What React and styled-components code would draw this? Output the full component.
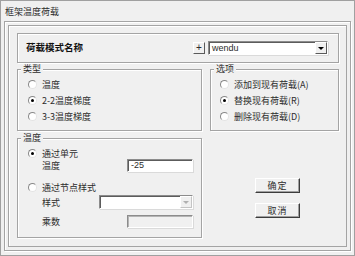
import React from "react";
import styled, { createGlobalStyle } from "styled-components";

const bg = "#f0f0f0";
const line = "#a4a4a4";
const cjk = `"Noto Sans CJK SC", "Noto Sans", sans-serif`;

const Global = createGlobalStyle`
  html, body { margin: 0; padding: 0; background: ${bg}; }
`;

const Window = styled.div`
  width: 355px;
  height: 256px;
  box-sizing: border-box;
  border: 1px solid #a0a0a0;
  background: ${bg};
  display: flex;
  flex-direction: column;
  font-family: ${cjk};
  font-size: 9px;
  color: #2c2c2c;
`;

const TitleBar = styled.div`
  height: 20px;
  display: flex;
  align-items: center;
  padding-left: 4px;
  line-height: 1;
`;

// etched double frame around the dialog body
const Frame = styled.div`
  flex: 1;
  margin: 0 3px 4px 3px;
  padding: 3px;
  display: flex;
  border: 1px solid ${line};
  box-shadow: inset 1px 1px 0 #fff, 1px 1px 0 #fff;
`;

const Body = styled.div`
  flex: 1;
  display: flex;
  flex-direction: column;
  padding: 7px 7px 0 8px;
  border: 1px solid ${line};
  box-shadow: inset 1px 1px 0 #fff;
`;

const NameBox = styled.div`
  width: 322px;
  height: 30px;
  box-sizing: border-box;
  display: flex;
  align-items: center;
  padding: 0 10px 0 8px;
  border: 1px solid ${line};
  box-shadow: inset 1px 1px 0 #fff, 1px 1px 0 #fff;
`;

const NameLabel = styled.span`
  flex: 1;
  font-size: 9.5px;
  font-weight: 700;
  line-height: 1;
  color: #111;
`;

const Raised = styled.div`
  box-sizing: border-box;
  background: ${bg};
  border: 1px solid;
  border-color: #fff #5a5a5a #5a5a5a #fff;
  display: flex;
  align-items: center;
  justify-content: center;
`;

const PlusButton = styled(Raised)`
  width: 12px;
  height: 12px;
  margin-right: 3px;
  font-family: "Liberation Sans", sans-serif;
  font-size: 10px;
  line-height: 1;
`;

const Sunken = styled.div`
  box-sizing: border-box;
  width: ${(p) => p.$w}px;
  height: ${(p) => p.$h || 13}px;
  background: ${(p) => (p.$disabled ? bg : "#fff")};
  border: 1px solid;
  border-color: #8c8c8c #fff #fff #8c8c8c;
  box-shadow: inset 1px 1px 0 ${(p) => (p.$disabled ? "#b4b4b4" : "#5c5c5c")},
    1px 1px 0 #dadada;
  display: flex;
  align-items: center;
`;

const FieldText = styled.span`
  flex: 1;
  padding-left: 3px;
  font-family: "Liberation Sans", sans-serif;
  font-size: 9px;
  line-height: 1;
`;

const ArrowButton = styled(Raised)`
  width: 12px;
  height: 100%;
  border-color: ${(p) => (p.$disabled ? "#fff #c4c4c4 #c4c4c4 #fff" : "#fff #5a5a5a #5a5a5a #fff")};

  &::after {
    content: "";
    border-left: 3px solid transparent;
    border-right: 3px solid transparent;
    border-top: 3px solid ${(p) => (p.$disabled ? "#b0b0b0" : "#000")};
  }
`;

const Grid = styled.div`
  margin-top: 1px;
  display: grid;
  grid-template-columns: 185px 129px;
  grid-template-rows: 67px auto;
  column-gap: 8px;
  row-gap: 2px;
`;

const Group = styled.fieldset`
  margin: 0;
  min-width: 0;
  box-sizing: border-box;
  align-self: ${(p) => (p.$top ? "start" : "stretch")};
  padding: ${(p) => p.$pad || "2px 8px 5px 10px"};
  border: 1px solid ${line};
  box-shadow: inset 1px 1px 0 #fff, 1px 1px 0 #fff;
`;

const Caption = styled.legend`
  margin-left: ${(p) => p.$shift || -7}px;
  padding: 0 2px;
  font-size: 9px;
  line-height: 10px;
  background: ${bg};
`;

const RadioRow = styled.label`
  display: flex;
  align-items: center;
  gap: 5px;
  height: ${(p) => p.$h || 16}px;
  margin-top: ${(p) => p.$mt || 0}px;
  line-height: 1;
  white-space: nowrap;
`;

const RadioMark = styled.span`
  width: 9px;
  height: 9px;
  box-sizing: border-box;
  border-radius: 50%;
  background: #fff;
  border: 1px solid;
  border-color: #888 #e4e4e4 #e4e4e4 #888;
  display: grid;
  place-items: center;

  &::after {
    content: "";
    width: 3px;
    height: 3px;
    border-radius: 50%;
    background: ${(p) => (p.$on ? "#000" : "transparent")};
  }
`;

const SubRow = styled.div`
  display: flex;
  align-items: center;
  justify-content: space-between;
  margin-left: 14px;
  margin-top: ${(p) => p.$mt || 0}px;
  line-height: 1;
`;

const ButtonColumn = styled.div`
  display: flex;
  flex-direction: column;
  gap: 10px;
  padding: 45px 0 0 45px;
`;

const DialogButton = styled(Raised)`
  width: 45px;
  height: 15px;
  border-color: #fff #3c3c3c #3c3c3c #fff;
  box-shadow: inset -1px -1px 0 #a0a0a0;
  font-size: 9px;
  letter-spacing: 1px;
  line-height: 1;
`;

const Radio = ({ on, children, h, mt }) => (
  <RadioRow $h={h} $mt={mt}>
    <RadioMark $on={on} />
    <span>{children}</span>
  </RadioRow>
);

export default function App() {
  return (
    <>
      <Global />
      <Window>
        <TitleBar>框架温度荷载</TitleBar>
        <Frame>
          <Body>
            <NameBox>
              <NameLabel>荷载模式名称</NameLabel>
              <PlusButton>+</PlusButton>
              <Sunken $w={120} $h={14}>
                <FieldText>wendu</FieldText>
                <ArrowButton />
              </Sunken>
            </NameBox>

            <Grid>
              <Group>
                <Caption>类型</Caption>
                <Radio>温度</Radio>
                <Radio on>2-2温度梯度</Radio>
                <Radio>3-3温度梯度</Radio>
              </Group>

              <Group $pad="2px 8px 5px 9px">
                <Caption $shift={-6}>选项</Caption>
                <Radio>添加到现有荷载(A)</Radio>
                <Radio on>替换现有荷载(R)</Radio>
                <Radio>删除现有荷载(D)</Radio>
              </Group>

              <Group $top $pad="4px 8px 9px 10px">
                <Caption>温度</Caption>
                <Radio on h={12}>通过单元</Radio>
                <SubRow>
                  <span>温度</span>
                  <Sunken $w={66}>
                    <FieldText>-25</FieldText>
                  </Sunken>
                </SubRow>
                <Radio h={12} mt={9}>通过节点样式</Radio>
                <SubRow $mt={2}>
                  <span>样式</span>
                  <Sunken $w={94} $h={14}>
                    <FieldText />
                    <ArrowButton $disabled />
                  </Sunken>
                </SubRow>
                <SubRow $mt={6}>
                  <span>乘数</span>
                  <Sunken $w={66} $disabled />
                </SubRow>
              </Group>

              <ButtonColumn>
                <DialogButton>确定</DialogButton>
                <DialogButton>取消</DialogButton>
              </ButtonColumn>
            </Grid>
          </Body>
        </Frame>
      </Window>
    </>
  );
}
